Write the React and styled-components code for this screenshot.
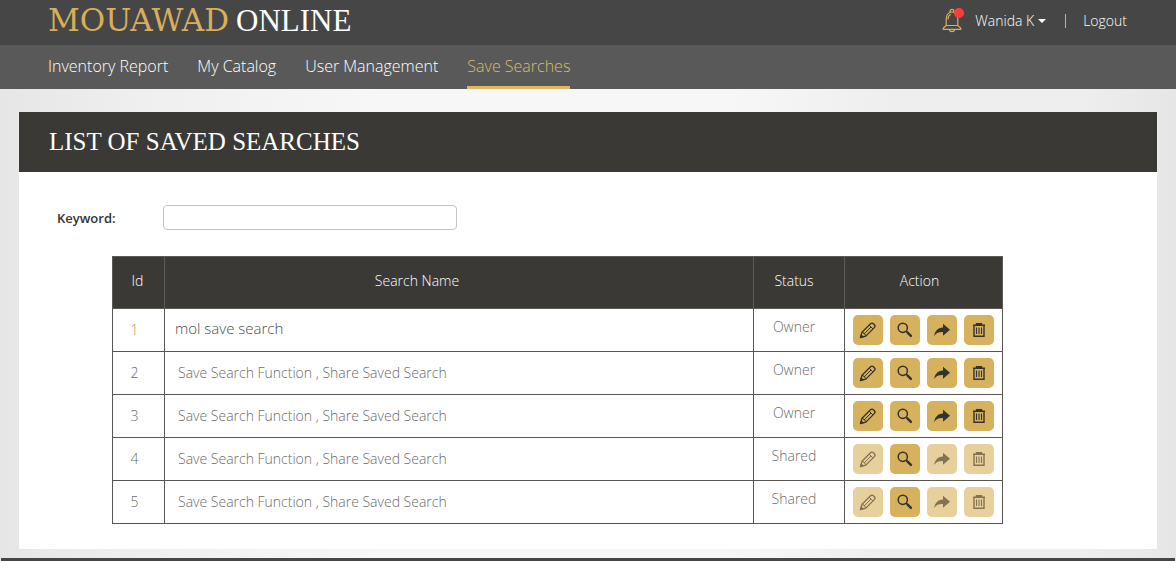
import React from "react";
import styled, { createGlobalStyle } from "styled-components";

const GlobalStyle = createGlobalStyle`
  * { box-sizing: border-box; }
  body {
    margin: 0;
    color: #6b6b6b;
    font: 300 14px/20px "Open Sans", "Noto Sans", sans-serif;
  }
`;

const Page = styled.div`
  display: flex;
  flex-direction: column;
  min-height: 100vh;
  background: linear-gradient(90deg, #e6e6e6, #efefef 12%, #f7f7f7 32%, #f7f7f7 62%, #eeeeee 76%, #eeeeee 92%, #e6e6e6);
`;

const TopBar = styled.header`
  display: flex;
  align-items: center;
  justify-content: space-between;
  height: 45px;
  padding: 0 49px 4px 48px;
  background: #464646;
`;

const Logo = styled.a`
  display: flex;
  align-items: baseline;
  gap: 7px;
  color: #fff;
  font: 400 31px/40px "Liberation Serif", serif;
  text-decoration: none;
`;

const LogoMark = styled.span`
  color: #d8ae58;
  font: 400 31px/40px "DejaVu Serif", serif;
`;

const Account = styled.div`
  display: flex;
  align-items: center;
  color: #fff;
`;

const Bell = styled.button`
  position: relative;
  display: flex;
  width: 20px;
  height: 26px;
  margin-right: 13px;
  padding: 0;
  border: 0;
  background: none;
`;

const BellBadge = styled.span`
  position: absolute;
  top: 0;
  right: -2px;
  width: 10px;
  height: 10px;
  border-radius: 50%;
  background: #ff3b3b;
`;

const UserMenu = styled.button`
  display: flex;
  align-items: center;
  gap: 4px;
  padding: 0;
  border: 0;
  background: none;
  color: inherit;
  font: inherit;
`;

const Caret = styled.span`
  border: 4px solid transparent;
  border-top-color: #fff;
  border-bottom: 0;
`;

const Divider = styled.span`
  width: 1px;
  height: 14px;
  margin: 0 17px 0 19px;
  background: #d8ae58;
`;

const Logout = styled.a`
  color: inherit;
  text-decoration: none;
`;

const Nav = styled.nav`
  display: flex;
  gap: 29px;
  height: 44px;
  padding: 0 48px;
  background: #595959;
`;

const NavLink = styled.a`
  border-bottom: 3px solid ${(p) => (p.$active ? "#e0b95f" : "transparent")};
  color: ${(p) => (p.$active ? "#dcbc66" : "#fff")};
  font-size: 16px;
  line-height: 42px;
  text-decoration: none;
`;

const Panel = styled.main`
  margin: 23px 19px 9px;
  padding-bottom: 25px;
  background: #fff;
`;

const Title = styled.h1`
  margin: 0;
  padding: 0 30px;
  background: #3a3935;
  color: #fff;
  font: 400 25px/60px "Liberation Serif", serif;
`;

const Filter = styled.form`
  display: flex;
  align-items: center;
  padding: 33px 38px 26px;
`;

const FilterLabel = styled.label`
  width: 106px;
  color: #333;
  font-size: 13px;
  font-weight: 600;
`;

const FilterInput = styled.input`
  width: 294px;
  height: 25px;
  padding: 0 8px;
  border: 1px solid #c4c4c4;
  border-radius: 4px;
  background: #fff;
  font: inherit;
`;

const TableWrap = styled.div`
  margin: 0 154px 0 93px;
`;

const Table = styled.table`
  width: 100%;
  border-collapse: collapse;
  table-layout: fixed;
`;

const Col = styled.col`
  width: ${(p) => p.$width};
`;

const HeadCell = styled.th`
  height: 52px;
  padding: 0 ${(p) => p.$inset} 4px 0;
  border: 1px solid #5b5a57;
  background: #3a3935;
  color: #fff;
  font-weight: 300;
`;

const Cell = styled.td`
  height: 43px;
  padding: 0;
  border: 1px solid #575653;
`;

const IdCell = styled(Cell)`
  padding-right: 8px;
  color: ${(p) => (p.$highlight ? "#c98f4a" : "#6b6b6b")};
  text-align: center;
`;

const NameCell = styled(Cell)`
  padding: ${(p) => (p.$highlight ? "0 0 4px 10px" : "0 0 0 13px")};
  color: ${(p) => (p.$highlight ? "#4c4c4c" : "#6b6b6b")};
  font-size: ${(p) => (p.$highlight ? "15px" : "14px")};
`;

const StatusCell = styled(Cell)`
  padding: 0 10px 6px 0;
  text-align: center;
`;

const Actions = styled.div`
  display: flex;
  gap: 7px;
  padding-left: 8px;
`;

const ActionButton = styled.button`
  display: flex;
  align-items: center;
  justify-content: center;
  width: 30px;
  height: 30px;
  padding: 0;
  border: 0;
  border-radius: 5px;
  background: ${(p) => (p.disabled ? "#e8d09c" : "#d6b15e")};
  color: ${(p) => (p.disabled ? "#827354" : "#35332e")};
`;

const Footer = styled.footer`
  flex: 1;
  min-height: 3px;
  margin: 0 1px;
  background: #464646;
`;

function BellIcon() {
  return (
    <svg width="20" height="26" viewBox="0 0 20 26" fill="none" stroke="#d8ae58" strokeWidth="1.2" aria-hidden="true">
      <path d="M8 4.2V3.4a2 2 0 0 1 4 0v.8M4.200 17.500V11c0-4 2.200-7 5.800-7s5.800 3 5.800 7v6.500M4.200 17.500 1.300 20v1.300h17.400V20l-2.900-2.500H4.200M6 11.500c0-2.600 1-4.400 2.700-5.200M7.300 21.500a2.800 2.800 0 0 0 5.400 0" />
    </svg>
  );
}

function PencilIcon() {
  return (
    <svg width="18" height="18" viewBox="0 0 18 18" fill="none" stroke="currentColor" strokeWidth="1.300" strokeLinejoin="round" aria-hidden="true">
      <path d="M1.500 16.500 3 11.300 11.500 2.800c.9-.9 2-1 2.900-.1l1 1c.9.9.8 2-.1 2.900L6.800 15.100Z" />
      <path d="M3 11.300c1.200-.1 1.900.4 1.900 1.700 1.300 0 2 .8 1.900 2.100M10.200 4.200l3.700 3.700M12 6l-6.900 7" strokeWidth="1" />
      <path d="m1.500 16.500.7-2.300 1.600 1.600Z" fill="currentColor" />
    </svg>
  );
}

function SearchIcon() {
  return (
    <svg width="18" height="18" viewBox="0 0 18 18" fill="none" stroke="currentColor" aria-hidden="true">
      <circle cx="6.800" cy="6.800" r="4.600" strokeWidth="1.500" />
      <path d="m10.200 10.200 1.600 1.600" strokeWidth="1.500" />
      <path d="m11.600 11.600 3.300 3.300" strokeWidth="2.400" strokeLinecap="round" />
    </svg>
  );
}

function ShareIcon() {
  return (
    <svg width="18" height="18" viewBox="0 0 18 18" fill="currentColor" aria-hidden="true">
      <path d="M10 2.800 17 8.700 10 14.700v-3.600c-3.800-.2-6.500.7-8.800 3.900C1.700 10.300 4.500 6.700 10 6.400Z" />
    </svg>
  );
}

function TrashIcon() {
  return (
    <svg width="16" height="18" viewBox="0 0 16 18" fill="none" stroke="currentColor" strokeWidth="1.400" aria-hidden="true">
      <path d="M2 4.300h12M5.500 4V2.700h5V4M3 4.500v10.800h10V4.500" />
      <path d="M5.500 6.500v6.500M8 6.500v6.500M10.500 6.500v6.500" strokeWidth="1.100" />
    </svg>
  );
}

const links = ["Inventory Report", "My Catalog", "User Management", "Save Searches"];

const searches = [
  { id: 1, name: "mol save search", status: "Owner" },
  { id: 2, name: "Save Search Function , Share Saved Search", status: "Owner" },
  { id: 3, name: "Save Search Function , Share Saved Search", status: "Owner" },
  { id: 4, name: "Save Search Function , Share Saved Search", status: "Shared" },
  { id: 5, name: "Save Search Function , Share Saved Search", status: "Shared" },
];

function SearchRow({ search }) {
  const shared = search.status === "Shared";
  const first = search.id === 1;
  return (
    <tr>
      <IdCell $highlight={first}>{search.id}</IdCell>
      <NameCell $highlight={first}>{search.name}</NameCell>
      <StatusCell>{search.status}</StatusCell>
      <Cell>
        <Actions>
          <ActionButton type="button" aria-label="Edit" disabled={shared}><PencilIcon /></ActionButton>
          <ActionButton type="button" aria-label="Search"><SearchIcon /></ActionButton>
          <ActionButton type="button" aria-label="Share" disabled={shared}><ShareIcon /></ActionButton>
          <ActionButton type="button" aria-label="Delete" disabled={shared}><TrashIcon /></ActionButton>
        </Actions>
      </Cell>
    </tr>
  );
}

export default function App() {
  return (
    <Page>
      <GlobalStyle />
      <TopBar>
        <Logo href="#"><LogoMark>MOUAWAD</LogoMark>ONLINE</Logo>
        <Account>
          <Bell type="button" aria-label="Notifications"><BellIcon /><BellBadge /></Bell>
          <UserMenu type="button">Wanida K<Caret /></UserMenu>
          <Divider />
          <Logout href="#">Logout</Logout>
        </Account>
      </TopBar>
      <Nav>
        {links.map((link) => (
          <NavLink key={link} href="#" $active={link === "Save Searches"}>{link}</NavLink>
        ))}
      </Nav>
      <Panel>
        <Title>LIST OF SAVED SEARCHES</Title>
        <Filter>
          <FilterLabel htmlFor="keyword">Keyword:</FilterLabel>
          <FilterInput id="keyword" type="text" />
        </Filter>
        <TableWrap>
          <Table>
            <colgroup>
              <Col $width="52px" />
              <Col $width="auto" />
              <Col $width="91px" />
              <Col $width="158px" />
            </colgroup>
            <thead>
              <tr>
                <HeadCell $inset="2px">Id</HeadCell>
                <HeadCell $inset="84px">Search Name</HeadCell>
                <HeadCell $inset="10px">Status</HeadCell>
                <HeadCell $inset="8px">Action</HeadCell>
              </tr>
            </thead>
            <tbody>
              {searches.map((search) => <SearchRow key={search.id} search={search} />)}
            </tbody>
          </Table>
        </TableWrap>
      </Panel>
      <Footer />
    </Page>
  );
}
